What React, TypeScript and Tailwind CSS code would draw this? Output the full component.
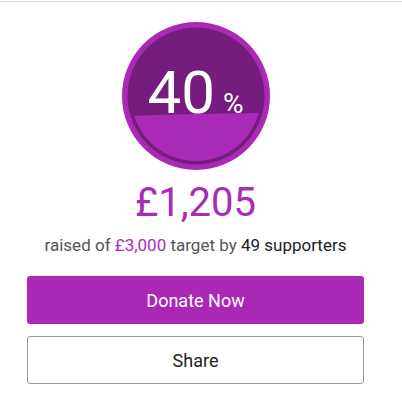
const purple = "#a92ab5";

function ProgressBadge({ percent }: { percent: number }) {
  return (
    <div className="relative w-[148px] h-[148px]">
      <svg width="148" height="148" viewBox="0 0 148 148" className="block">
        <defs>
          <clipPath id="inner-fill">
            <circle cx="74" cy="74" r="65" />
          </clipPath>
        </defs>
        <circle cx="74" cy="74" r="74" fill={purple} />
        <circle cx="74" cy="74" r="68.5" fill="#751c7e" />
        <g clipPath="url(#inner-fill)">
          <path d="M0 94.5 Q 40 92.5 74 92 T 148 90.5 L148 148 L0 148 Z" fill={purple} />
        </g>
      </svg>
      <div className="absolute left-0 right-0 top-[41px] flex justify-center items-baseline text-white leading-none">
        <span className="text-[60px] leading-none">{percent}</span>
        <span className="text-[28px] leading-none ml-2">%</span>
      </div>
    </div>
  );
}

export default function App() {
  return (
    <div className="bg-white min-h-screen" style={{ fontFamily: "Roboto, 'Liberation Sans', sans-serif" }}>
      <div className="h-px mt-px bg-[#d4d4d4]"></div>
      <div className="ml-[27px] w-[337px] flex flex-col items-center">
        <div className="mt-[20px]">
          <ProgressBadge percent={40} />
        </div>
        <div className="mt-[13px] text-[40px] leading-none text-[#a82db4]">£1,205</div>
        <p className="mt-[10px] text-[17px] leading-6 text-[#555]">
          raised of <span className="text-[#a82db4]">£3,000</span> target by{" "}
          <span className="text-[#222]">49 supporters</span>
        </p>
        <button className="mt-[19px] w-full h-[48px] rounded-[3px] bg-[#ab28b4] text-white text-[18px]">
          Donate Now
        </button>
        <button className="mt-[12px] w-full h-[48px] rounded-[3px] border border-[#999] bg-white text-[#222] text-[18px]">
          Share
        </button>
      </div>
    </div>
  );
}
